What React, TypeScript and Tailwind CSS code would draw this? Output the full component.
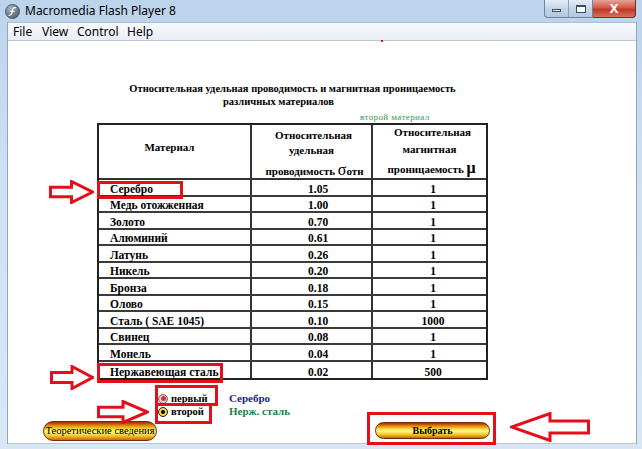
import React from "react";

const rows: [string, string, string][] = [
  ["Серебро", "1.05", "1"],
  ["Медь отожженная", "1.00", "1"],
  ["Золото", "0.70", "1"],
  ["Алюминий", "0.61", "1"],
  ["Латунь", "0.26", "1"],
  ["Никель", "0.20", "1"],
  ["Бронза", "0.18", "1"],
  ["Олово", "0.15", "1"],
  ["Сталь ( SAE 1045)", "0.10", "1000"],
  ["Свинец", "0.08", "1"],
  ["Монель", "0.04", "1"],
  ["Нержавеющая сталь", "0.02", "500"],
];

const Arrow = ({ w, h, left, className }: { w: number; h: number; left?: boolean; className: string }) => {
  const hx = w * 0.5;
  const pts = left
    ? `${w - 1.5},${h * 0.3} ${hx},${h * 0.3} ${hx},1.5 1.5,${h / 2} ${hx},${h - 1.5} ${hx},${h * 0.7} ${w - 1.5},${h * 0.7}`
    : `1.5,${h * 0.3} ${hx},${h * 0.3} ${hx},1.5 ${w - 1.5},${h / 2} ${hx},${h - 1.5} ${hx},${h * 0.7} 1.5,${h * 0.7}`;
  return (
    <svg width={w} height={h} className={className}>
      <polygon points={pts} fill="none" stroke="#e3101c" strokeWidth="3" strokeLinejoin="miter" />
    </svg>
  );
};

const serif = "font-['Liberation_Serif','Times_New_Roman',serif]";
const gold =
  "bg-[linear-gradient(to_bottom,#9c2a05_0%,#e08a10_20%,#fbe44a_42%,#fff48a_55%,#f2c428_78%,#c06a06_100%)]";

export default function App() {
  return (
    <div className="relative w-[642px] h-[449px] overflow-hidden bg-[linear-gradient(to_bottom,#bcd3ec,#cfe0f2_40%,#d9e7f5)] font-['Noto_Sans',sans-serif]">
      {/* title bar */}
      <div className="flex h-[22px] items-start">
        <div className="flex items-center h-[22px] pl-[5px]">
          <svg width="15" height="15" viewBox="0 0 15 15">
            <defs>
              <radialGradient id="fl" cx="0.35" cy="0.3" r="0.8">
                <stop offset="0" stopColor="#a8b4c2" />
                <stop offset="1" stopColor="#4d5b6b" />
              </radialGradient>
            </defs>
            <circle cx="7.5" cy="7.5" r="7" fill="url(#fl)" stroke="#3c4754" strokeWidth="0.8" />
            <path d="M10.5 3.6 C8.2 3.4 7.6 5 7.2 7.5 C6.8 10 6.2 11.3 4.2 11.4" fill="none" stroke="#fff" strokeWidth="1.3" strokeLinecap="round" />
            <path d="M5.6 7.3 H9.2" stroke="#fff" strokeWidth="1.1" strokeLinecap="round" />
          </svg>
          <span className="ml-[5px] text-[12px] leading-[22px] text-black">Macromedia Flash Player 8</span>
        </div>
        <div className="ml-auto mr-[6px] flex">
          <div className="flex h-[18px] rounded-bl-[4px] border border-t-0 border-[#6d83a0] bg-[linear-gradient(to_bottom,#e4edf7,#c3d4e8_50%,#b2c7df)]">
            <div className="flex w-[24px] items-center justify-center border-r border-[#8aa0bb]">
              <span className="mt-[4px] block h-[3px] w-[9px] border border-[#3b4d63] bg-white" />
            </div>
            <div className="flex w-[23px] items-center justify-center">
              <span className="block h-[8px] w-[10px] border border-[#3b4d63] border-t-2 bg-white" />
            </div>
          </div>
          <div className="flex h-[18px] w-[43px] items-center justify-center rounded-br-[4px] border border-t-0 border-l-0 border-[#7a2a24] bg-[linear-gradient(to_bottom,#e8a193,#d05a4b_45%,#c03828_55%,#d6705b)]">
            <span className="text-[13px] font-bold leading-none text-white">X</span>
          </div>
        </div>
      </div>

      {/* menu + content */}
      <div className="ml-[7px] mr-[5px] border-x border-[#8fa7c4]">
        <div className="flex h-[18px] items-center border-t border-[#a9bdd6] bg-[linear-gradient(to_bottom,#f7f9fc,#e9eef5)] text-[12px] text-black">
          <span className="ml-[5px] w-[29px]">File</span>
          <span className="w-[35px]">View</span>
          <span className="w-[50px]">Control</span>
          <span>Help</span>
        </div>

        <div className={`relative h-[404px] border-t border-b border-[#b8c4d2] bg-white ${serif} text-black`}>
          <div className="ml-[89px] w-[391px] pt-[41px]">
            <div className="h-[13px] whitespace-nowrap text-center text-[10.5px] font-bold leading-[13px]">
              Относительная удельная проводимость и магнитная проницаемость
            </div>
            <div className="h-[13px] pr-[28px] text-center text-[10.5px] font-bold leading-[13px]">
              различных материалов
            </div>
            <div className="mt-[5px] h-[9px] pl-[263px] text-[9px] leading-[9px] tracking-[0.4px] text-[#2e9a4a]">
              второй материал
            </div>

            <div className="mt-[1px] border-2 border-[#222]">
              <div className="flex h-[55px] border-b-2 border-[#333] text-[11px] font-bold">
                <div className="flex w-[153px] items-center justify-center border-r-2 border-[#333] pb-[9px] pr-[10px]">
                  Материал
                </div>
                <div className="flex w-[121px] flex-col items-center border-r-2 border-[#333] pt-[3px] leading-[15px]">
                  <span className="pl-[4px]">Относительная</span>
                  <span>удельная</span>
                  <span className="mt-[6px] pl-[6px]">
                    проводимость <span className="text-[16px] font-normal leading-[12px]">σ</span>отн
                  </span>
                </div>
                <div className="flex flex-1 flex-col items-center leading-[15px]">
                  <span className="pl-[6px]">Относительная</span>
                  <span className="mt-[2px]">магнитная</span>
                  <span className="mt-[5px] pl-[4px]">
                    проницаемость <span className="text-[16px] leading-[12px]">μ</span>
                  </span>
                </div>
              </div>
              {rows.map((r, i) => (
                <div
                  key={r[0]}
                  className={`flex h-[16.5px] text-[11.5px] font-bold leading-[12px] ${i < rows.length - 1 ? "border-b-2 border-[#3a3a3a]" : ""}`}
                >
                  <div className="flex w-[153px] items-end border-r-2 border-[#333] pl-[11px]">{r[0]}</div>
                  <div className="flex w-[121px] items-end border-r-2 border-[#333] pl-[56px]">{r[1]}</div>
                  <div className="flex flex-1 items-end justify-center pl-[7px]">{r[2]}</div>
                </div>
              ))}
            </div>
          </div>

          {/* radios */}
          <div className="ml-[150px] mt-[12px] flex">
            <div className="w-[71px] text-[10.5px] font-bold leading-[13px]">
              <div className="flex h-[13px] items-center">
                <span className="flex h-[10px] w-[10px] items-center justify-center rounded-full border border-[#6b6b6b] bg-[radial-gradient(circle,#f4f4f4,#b9b9b9)]">
                  <span className="block h-[5px] w-[5px] rounded-full bg-[#d9303a]" />
                </span>
                <span className="ml-[3px]">первый</span>
              </div>
              <div className="flex h-[13px] items-center">
                <span className="flex h-[10px] w-[10px] items-center justify-center rounded-full border border-[#222] bg-[#f1d64a]">
                  <span className="block h-[4px] w-[4px] rounded-full bg-black" />
                </span>
                <span className="ml-[3px]">второй</span>
              </div>
            </div>
            <div className="text-[11px] font-bold leading-[13px]">
              <div className="h-[13px] text-[#1c1f86]">Серебро</div>
              <div className="h-[13px] text-[#1f7a4c]">Нерж. сталь</div>
            </div>
          </div>

          {/* buttons */}
          <div className="mt-[3px] flex items-start">
            <button className={`ml-[35px] flex h-[20px] w-[114px] items-center justify-center rounded-full border border-[#7a2c08] ${gold} text-[10.5px] leading-none text-black`}>
              Теоретические сведения
            </button>
            <button className={`ml-[218px] mt-[1px] flex h-[17px] w-[115px] items-center justify-center rounded-full border border-[#7a2c08] ${gold} text-[10px] font-bold leading-none text-black`}>
              Выбрать
            </button>
          </div>
        </div>
      </div>

      {/* red dot */}
      <span className="absolute left-[381px] top-[40px] block h-[2px] w-[2px] bg-[#e3101c]" />

      {/* annotations */}
      <div className="absolute left-[97px] top-[181px] h-[18px] w-[86px] border-[3px] border-[#e3101c]" />
      <Arrow w={45} h={24} className="absolute left-[49px] top-[180px]" />

      <div className="absolute left-[97px] top-[363px] h-[20px] w-[126px] border-[3px] border-[#e3101c]" />
      <Arrow w={44} h={25} className="absolute left-[50px] top-[365px]" />

      <div className="absolute left-[155px] top-[385px] h-[21px] w-[63px] border-[3px] border-[#e3101c]" />
      <div className="absolute left-[155px] top-[403px] h-[21px] w-[57px] border-[3px] border-[#e3101c]" />
      <Arrow w={52} h={24} className="absolute left-[97px] top-[400px]" />

      <div className="absolute left-[367px] top-[412px] h-[33px] w-[129px] border-[3px] border-[#e3101c]" />
      <Arrow w={80} h={30} left className="absolute left-[510px] top-[412px]" />
    </div>
  );
}
